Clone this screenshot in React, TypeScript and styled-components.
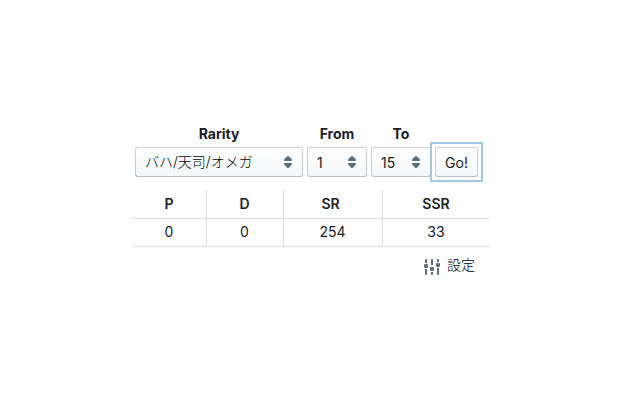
import React from "react";
import styled, { createGlobalStyle } from "styled-components";

const GlobalStyle = createGlobalStyle`
  * { box-sizing: border-box; }
  body {
    margin: 0;
    background: #fff;
    color: #182026;
    font: 14px/18px Inter, "Noto Sans CJK JP", sans-serif;
  }
`;

const Page = styled.main`
  padding: 125px 0 0 132px;
`;

const Form = styled.form`
  display: flex;
  gap: 4px;
  padding-left: 3px;
`;

const Field = styled.label<{ $width: number }>`
  display: flex;
  flex-direction: column;
  gap: 4px;
  width: ${(p) => p.$width}px;
`;

const FieldTitle = styled.span`
  font-weight: 700;
  text-align: center;
`;

const SelectBox = styled.span`
  display: flex;
  align-items: center;
  justify-content: space-between;
  height: 30px;
  padding: 0 7px 0 10px;
  border-radius: 3px;
  background: linear-gradient(#fff, #f4f8fa);
  box-shadow: inset 0 0 0 1px rgba(16, 22, 26, 0.2), inset 0 -1px 0 rgba(16, 22, 26, 0.06);
  white-space: nowrap;
`;

const Value = styled.span<{ $japanese?: boolean }>`
  padding: ${(p) => (p.$japanese ? "0 0 1px" : "2px 0 0")};
  font-weight: ${(p) => (p.$japanese ? 300 : 400)};
  color: ${(p) => (p.$japanese ? "#000" : "#182026")};
`;

const FocusRing = styled.span`
  align-self: flex-end;
  display: flex;
  margin: 0 -5px -5px;
  padding: 3px;
  border: 2px solid #a0c8e4;
  border-radius: 1px;
`;

const GoButton = styled.button`
  width: 43px;
  height: 30px;
  padding: 2px 0 0;
  border: 0;
  border-radius: 3px;
  background: linear-gradient(#fff, #f4f8fa);
  color: #182026;
  font: inherit;
  box-shadow: inset 0 0 0 1px rgba(16, 22, 26, 0.2), inset 0 -1px 0 rgba(16, 22, 26, 0.06);
`;

const Table = styled.table`
  width: 358px;
  margin-top: 13px;
  table-layout: fixed;
  border-collapse: separate;
  border-spacing: 0;
`;

const Cell = styled.td<{ $divided: boolean }>`
  height: 28px;
  padding: 0 ${(p) => (p.$divided ? 1 : 0)}px 2px 0;
  text-align: center;
  border-bottom: 1px solid #dedfe0;
  border-left: ${(p) => (p.$divided ? "1px solid #dedfe0" : "0")};
`;

const HeadCell = styled(Cell).attrs({ as: "th" })<{ $shift?: number }>`
  height: 29px;
  padding: 0 ${(p) => p.$shift ?? 0}px 0 0;
  font-weight: 600;
`;

const Settings = styled.div`
  display: flex;
  align-items: center;
  justify-content: flex-end;
  gap: 7px;
  width: 343px;
  height: 20px;
  margin-top: 10px;
  color: #000;
  font-weight: 300;
`;

const SettingsText = styled.span`
  padding-bottom: 4px;
`;

const CaretIcon = () => (
  <svg width="16" height="16" viewBox="0 0 16 16" fill="#5c7080">
    <path d="M5 7h6a1 1 0 0 0 1-1c0-.24-.1-.46-.24-.63l-3-3A1 1 0 0 0 8 2a1 1 0 0 0-.76.37l-3 3A1 1 0 0 0 5 7Zm6 2H5a1 1 0 0 0-1 1c0 .24.1.46.24.63l3 3A1 1 0 0 0 8 14a1 1 0 0 0 .76-.37l3-3A1 1 0 0 0 11 9Z" />
  </svg>
);

const SettingsIcon = () => (
  <svg width="16" height="16" viewBox="0 0 16 16" fill="#5c7080">
    <path d="M3 1c0-.55-.45-1-1-1S1 .45 1 1v3h2V1Zm0 9H1v5c0 .55.45 1 1 1s1-.45 1-1v-5Zm6-9c0-.55-.45-1-1-1S7 .45 7 1v5h2V1Zm0 12H7v2c0 .55.45 1 1 1s1-.45 1-1v-2Zm6-12c0-.55-.45-1-1-1s-1 .45-1 1v2h2V1Zm0 8h-2v6c0 .55.45 1 1 1s1-.45 1-1V9Z" />
    <rect x="0" y="5" width="4" height="4" rx="1" />
    <rect x="6" y="8" width="4" height="4" rx="1" />
    <rect x="12" y="4" width="4" height="4" rx="1" />
  </svg>
);

const fields = [
  { title: "Rarity", value: "バハ/天司/オメガ", width: 168, japanese: true },
  { title: "From", value: "1", width: 60 },
  { title: "To", value: "15", width: 60 },
];

const columns = [
  { name: "P", count: 0, width: 74 },
  { name: "D", count: 0, width: 77, shift: 1 },
  { name: "SR", count: 254, width: 99, shift: 5 },
  { name: "SSR", count: 33, width: 108, shift: 1 },
];

export default function App() {
  return (
    <>
      <GlobalStyle />
      <Page>
        <Form>
          {fields.map((f) => (
            <Field key={f.title} $width={f.width}>
              <FieldTitle>{f.title}</FieldTitle>
              <SelectBox>
                <Value $japanese={f.japanese}>{f.value}</Value>
                <CaretIcon />
              </SelectBox>
            </Field>
          ))}
          <FocusRing>
            <GoButton type="button">Go!</GoButton>
          </FocusRing>
        </Form>
        <Table>
          <colgroup>
            {columns.map((c) => <col key={c.name} width={c.width} />)}
          </colgroup>
          <thead>
            <tr>
              {columns.map((c, i) => (
                <HeadCell key={c.name} $divided={i > 0} $shift={c.shift}>{c.name}</HeadCell>
              ))}
            </tr>
          </thead>
          <tbody>
            <tr>
              {columns.map((c, i) => (
                <Cell key={c.name} $divided={i > 0}>{c.count}</Cell>
              ))}
            </tr>
          </tbody>
        </Table>
        <Settings>
          <SettingsIcon />
          <SettingsText>設定</SettingsText>
        </Settings>
      </Page>
    </>
  );
}
